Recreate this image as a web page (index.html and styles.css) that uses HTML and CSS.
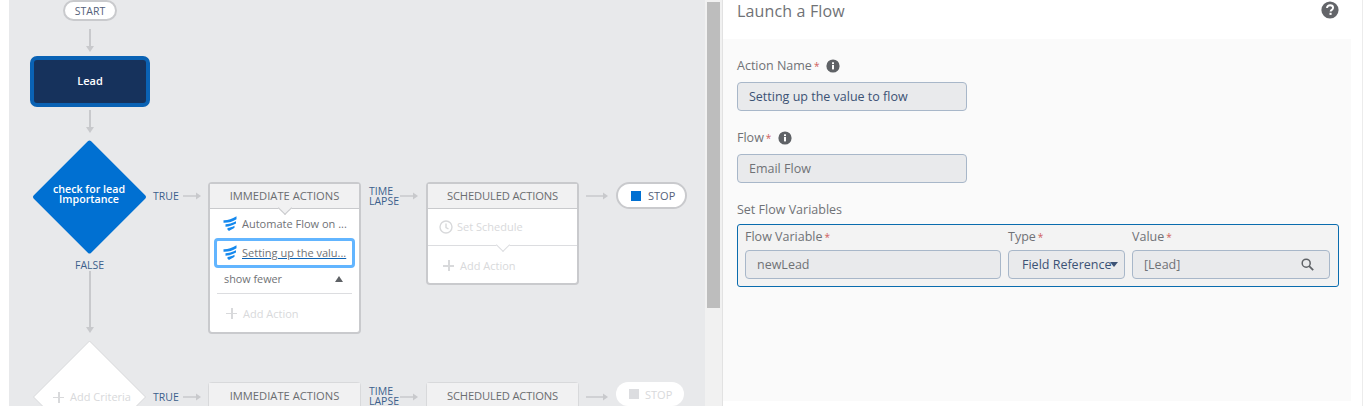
FILE: index.html
```html
<!DOCTYPE html>
<html lang="en">
<head>
<meta charset="utf-8">
<title>Launch a Flow</title>
<link rel="stylesheet" href="styles.css">
</head>
<body>
<svg class="defs" width="0" height="0" aria-hidden="true">
  <defs>
    <symbol id="flow" viewBox="0 0 14 15">
      <path d="M.5 4.200C4.500 4.400 8.500 3.300 13.500 .3V3.300C9.500 6 5 7 .5 6.800Z" fill="#1589ee"/>
      <path d="M2.500 8.200C5.500 8.200 9 7.200 13 5.200V7.600C9.500 9.700 6 10.700 2.500 10.700Z" fill="#1589ee"/>
      <path d="M4.500 12C6.500 12 8.800 11.100 11.500 9.800V11.800C9.500 13.200 7.500 14.300 6 14.900L4.500 13.800Z" fill="#1589ee"/>
    </symbol>
    <symbol id="info" viewBox="0 0 14 14">
      <circle cx="7" cy="7" r="6.600" fill="#5f6266"/>
      <rect x="6" y="6" width="2" height="4.400" fill="#fff"/>
      <rect x="6" y="3.300" width="2" height="1.800" fill="#fff"/>
    </symbol>
  </defs>
</svg>
<main class="page">
  <section class="canvas">
    <svg class="wires" width="696" height="406" viewBox="0 0 696 406" aria-hidden="true">
      <g class="wire wire-v">
        <path d="M81 29V47"/><path d="M81 110V129"/><path d="M81 271V329"/>
      </g>
      <g class="head">
        <path d="M77 46H85L81 52Z"/><path d="M77 127H85L81 133Z"/><path d="M77 327H85L81 333Z"/>
      </g>
      <g class="wire wire-h">
        <path d="M174 196H188"/><path d="M391 196H405"/><path d="M577 196H595"/>
        <path d="M174 397H188"/><path d="M391 397H405"/><path d="M577 397H595"/>
      </g>
      <g class="head">
        <path d="M187 192.500L192 196L187 199.500Z"/><path d="M404 192.500L409 196L404 199.500Z"/><path d="M594 192.500L599 196L594 199.500Z"/>
        <path d="M187 393.500L192 397L187 400.500Z"/><path d="M404 393.500L409 397L404 400.500Z"/><path d="M594 393.500L599 397L594 400.500Z"/>
      </g>
      <polygon class="dia-on" points="80.500,142.500 135,197 80.500,251.500 26,197"/>
      <polygon class="dia-off" points="80.500,341 136.500,397 80.500,453 24.500,397"/>
    </svg>

    <div class="node pill start">START</div>
    <div class="node lead">Lead</div>
    <div class="node dia-label">check for lead<br>Importance</div>
    <div class="node tag t-true1">TRUE</div>
    <div class="node tag t-false">FALSE</div>
    <div class="node tag t-true2">TRUE</div>
    <div class="node tag lapse l1">TIME<br>LAPSE</div>
    <div class="node tag lapse l2">TIME<br>LAPSE</div>
    <div class="node add-crit"><span class="plus"></span>Add Criteria</div>

    <div class="node card c-imm">
      <div class="card-head">IMMEDIATE ACTIONS</div>
      <div class="row"><svg class="flow-ico"><use href="#flow"/></svg><span>Automate Flow on ...</span></div>
      <div class="row row-sel"><svg class="flow-ico"><use href="#flow"/></svg><a href="#">Setting up the valu...</a></div>
      <div class="row-more"><span>show fewer</span><i class="tri"></i></div>
      <div class="row-add"><span class="plus"></span>Add Action</div>
    </div>

    <div class="node card c-sch">
      <div class="card-head head-sch">SCHEDULED ACTIONS</div>
      <div class="row-sched">
        <svg class="clock" width="14" height="14" viewBox="0 0 14 14"><circle cx="7" cy="7" r="6" /><path d="M7 3.500V7.500L9.500 9"/></svg>
        <span>Set Schedule</span>
      </div>
      <div class="row-add add-sched"><span class="plus"></span>Add Action</div>
    </div>

    <div class="node pill stop"><i class="sq"></i>STOP</div>

    <div class="node card card-off c-imm2"><div class="card-head">IMMEDIATE ACTIONS</div></div>
    <div class="node card card-off c-sch2"><div class="card-head head-sch">SCHEDULED ACTIONS</div></div>
    <div class="node pill stop stop-off"><i class="sq"></i>STOP</div>
  </section>

  <div class="scroll"><div class="thumb"></div></div>

  <section class="panel">
    <header class="panel-head">
      <h1>Launch a Flow</h1>
      <svg class="help" width="18" height="18" viewBox="0 0 18 18" aria-hidden="true">
        <circle cx="9" cy="9" r="8.600" fill="#636569"/>
        <path d="M6 7.100C6 5.300 7.300 4.300 9.100 4.300C10.900 4.300 12.100 5.300 12.100 6.800C12.100 8.900 9.600 8.800 9.600 10.600" fill="none" stroke="#fff" stroke-width="1.900"/>
        <rect x="8.500" y="11.800" width="2.100" height="2.100" fill="#fff"/>
      </svg>
    </header>
    <div class="panel-body">
      <div class="field f-name">
        <div class="label">Action Name<b>*</b><svg class="info"><use href="#info"/></svg></div>
        <div class="input strong">Setting up the value to flow</div>
      </div>
      <div class="field f-flow">
        <div class="label">Flow<b>*</b><svg class="info"><use href="#info"/></svg></div>
        <div class="input">Email Flow</div>
      </div>
      <div class="label f-set">Set Flow Variables</div>
      <div class="vars">
        <div class="var var-name">
          <div class="label small">Flow Variable<b>*</b></div>
          <div class="input">newLead</div>
        </div>
        <div class="var var-type">
          <div class="label small">Type<b>*</b></div>
          <div class="input strong select">Field Reference<i class="caret"></i></div>
        </div>
        <div class="var var-val">
          <div class="label small">Value<b>*</b></div>
          <div class="input search">[Lead]
            <svg width="13" height="13" viewBox="0 0 13 13" aria-hidden="true"><circle cx="5.200" cy="5.200" r="4" fill="none" stroke="#5f6266" stroke-width="1.500"/><path d="M8.200 8.200L12.200 12.200" stroke="#5f6266" stroke-width="1.800"/></svg>
          </div>
        </div>
      </div>
    </div>
  </section>
</main>
</body>
</html>
```

FILE: styles.css
```css
* { box-sizing: border-box; }
html, body { margin: 0; height: 100%; background: #fff; overflow: hidden; }
body { font-family: "Open Sans", "Liberation Sans", sans-serif; color: #707276; }
.defs { position: absolute; }

.page { display: flex; width: 1363px; height: 406px; padding-left: 9px; border-right: 1px solid #ececec; }

/* canvas */
.canvas { position: relative; flex: none; width: 696px; height: 406px; background: #e8e9eb; overflow: hidden; font-size: 11px; }
.wires { position: absolute; inset: 0; }
.wire path { fill: none; stroke: #c8c9cc; stroke-width: 2; }
.wire-h path { stroke-width: 1.500; }
.head path { fill: #c8c9cc; }
.dia-on { fill: #0070d2; stroke: #0070d2; stroke-width: 4; stroke-linejoin: round; }
.dia-off { fill: #fff; stroke: #d8d9db; stroke-width: 1; stroke-linejoin: round; }

.node { position: absolute; }
.pill { display: flex; align-items: center; justify-content: center; background: #fff; border: 2px solid #c9cacd; border-radius: 14px; color: #54617a; }
.start { left: 54px; top: 0; width: 54px; height: 21px; font-size: 10.500px; }
.lead { left: 21px; top: 56px; width: 120px; height: 51px; padding-bottom: 2px; display: flex; align-items: center; justify-content: center; background: #16325c; border: 4px solid #0a62b4; border-radius: 7px; color: #fff; font-size: 11px; font-weight: 600; }
.dia-label { left: 20px; top: 184px; width: 120px; text-align: center; color: #fff; font-size: 10.700px; line-height: 10px; font-weight: 600; }
.tag { color: #3b5f8c; font-size: 10.500px; line-height: 10px; }
.t-true1 { left: 144px; top: 191px; }
.t-true2 { left: 144px; top: 392px; }
.t-false { left: 66px; top: 260px; }
.lapse { font-size: 10.500px; }
.l1 { left: 360px; top: 186px; }
.l2 { left: 360px; top: 386px; }
.add-crit { left: 44px; top: 389px; display: flex; align-items: center; gap: 6px; color: #d8d9db; font-size: 11px; line-height: 16px; }

.plus { position: relative; flex: none; display: block; width: 11px; height: 11px; }
.plus::before, .plus::after { content: ""; position: absolute; background: #d8d9db; }
.plus::before { left: 0; right: 0; top: 5px; height: 1.500px; }
.plus::after { top: 0; bottom: 0; left: 5px; width: 1.500px; }

.card { width: 153px; background: #fff; border: 2px solid #c9cacd; border-radius: 4px; }
.card-head { position: relative; height: 25px; padding-bottom: 2px; display: flex; align-items: center; justify-content: center; background: #f1f1f2; border-bottom: 1px solid #c9cacd; color: #6b6d70; font-size: 11.200px; white-space: nowrap; }
.head-sch { letter-spacing: -.15px; }
.c-imm .card-head::after, .add-sched::before { content: ""; position: absolute; left: 50%; width: 9px; height: 9px; margin-left: -4.500px; transform: rotate(45deg); }
.c-imm .card-head::after { bottom: -5px; border-right: 1px solid #c9cacd; border-bottom: 1px solid #c9cacd; background: #f1f1f2; }
.c-imm { left: 199px; top: 182px; height: 152px; }
.c-sch { left: 417px; top: 182px; height: 103px; }
.row { display: flex; align-items: center; gap: 5px; height: 28px; padding-left: 13px; font-size: 11px; white-space: nowrap; }
.row-sel { margin: 1px 4px 0 4px; height: 30px; padding: 0 0 2px 6px; border: 3px solid #62b5ff; border-radius: 4px; }
.row-sel a { color: #707276; text-decoration-color: #0a62b4; }
.flow-ico { flex: none; width: 14px; height: 15px; }
.row-more { display: flex; align-items: center; justify-content: space-between; height: 26px; margin: 0 7px; padding: 0 9px 4px 7px; border-bottom: 1px solid #dcdde0; font-size: 10.800px; }
.tri { width: 0; height: 0; border-left: 4.500px solid transparent; border-right: 4.500px solid transparent; border-bottom: 6px solid #5f6266; }
.row-add { display: flex; align-items: center; gap: 6px; height: 38px; padding-left: 16px; color: #d8d9db; font-size: 11px; }
.row-sched { display: flex; align-items: center; gap: 4px; height: 37px; padding: 0 0 1px 11px; color: #d8d9db; font-size: 11px; border-bottom: 1px solid #dcdde0; }
.clock { fill: none; stroke: #d8d9db; stroke-width: 1.400; }
.add-sched { position: relative; height: 39px; padding-left: 15px; }
.add-sched::before { top: -6px; background: #fff; border-right: 1px solid #dcdde0; border-bottom: 1px solid #dcdde0; }

.stop { left: 607px; top: 182px; width: 71px; height: 27px; justify-content: flex-start; padding-left: 13px; gap: 7px; font-size: 11px; }
.sq { display: block; flex: none; width: 10px; height: 10px; background: #0070d2; }
.stop-off { left: 607px; top: 382px; width: 68px; height: 24px; border: 0; gap: 6px; color: #d8d9db; }
.stop-off .sq { background: #dcdde0; }

.card-off { border-width: 1px; border-color: #d8d9db; border-bottom: 0; height: 30px; }
.card-off .card-head { padding-bottom: 0; }
.c-imm2 { left: 199px; top: 382px; }
.c-sch2 { left: 417px; top: 382px; }

/* scrollbar */
.scroll { flex: none; width: 18px; height: 406px; padding: 2px 0 0 2px; background: #f1f1f1; border-right: 1px solid #e2e2e2; }
.thumb { width: 13px; height: 306px; background: #bdbdbd; }

/* panel */
.panel { flex: none; width: 628px; display: flex; flex-direction: column; height: 401px; }
.panel-head { flex: none; height: 39px; display: flex; justify-content: space-between; padding: 1px 12px 0 14px; background: #fff; }
.panel-head h1 { margin: 0; font-size: 16px; line-height: 20px; font-weight: 400; letter-spacing: .15px; color: #707276; }
.panel-body { flex: 1; background: #fafafa; padding: 18px 12px 0 14px; }
.label { display: flex; align-items: center; font-size: 12.500px; line-height: 18px; color: #707276; }
.label b { align-self: flex-start; color: #d0605c; font-size: 10px; font-weight: 400; margin-left: 2px; }
.info { width: 14px; height: 14px; margin-left: 7px; }
.field { width: 230px; }
.input { display: flex; align-items: center; height: 29px; padding-left: 11px; background: #e9eaec; border: 1px solid #a8b7c9; border-radius: 4px; font-size: 12.500px; color: #707276; white-space: nowrap; }
.input.strong { color: #3c5275; }
.f-name .label { margin-bottom: 7px; }
.f-flow { margin-top: 18px; }
.f-flow .label { margin-bottom: 7px; }
.f-set { margin-top: 18px; margin-bottom: 5px; }
.vars { display: flex; gap: 7px; width: 602px; height: 63px; padding: 2px 8px 0 7px; background: #f3f3f3; border: 1px solid #0a6cae; border-radius: 3px; }
.label.small { line-height: 20px; margin-bottom: 3px; }
.var-name { width: 256px; }
.var-type { width: 117px; }
.var-val { width: 198px; }
.select { position: relative; padding-left: 13px; }
.caret { position: absolute; right: 6px; top: 11px; width: 0; height: 0; border-left: 4px solid transparent; border-right: 4px solid transparent; border-top: 5px solid #3c5275; }
.search { justify-content: space-between; padding-right: 15px; }
```
